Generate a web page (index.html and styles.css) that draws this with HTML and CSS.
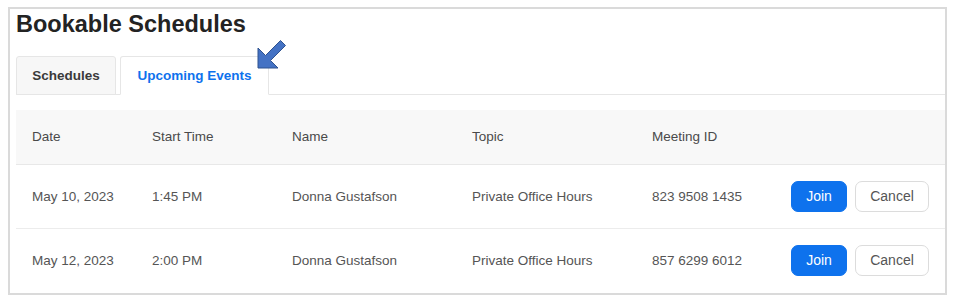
FILE: index.html
```html
<!DOCTYPE html>
<html lang="en">
<head>
  <meta charset="UTF-8" />
  <title>Bookable Schedules</title>
  <link rel="stylesheet" href="styles.css">
</head>
<body>
  <div class="frame">
    <h1 class="page-title">Bookable Schedules</h1>

    <!-- TABS -->
    <div class="tabs">
      <div class="tab tab-schedules">Schedules</div>
      <div class="tab tab-upcoming active">Upcoming Events</div>
    </div>

    <!-- callout arrow -->
    <svg class="callout" width="35" height="35" viewBox="0 0 35 35" aria-hidden="true">
      <polygon points="3,31 3,11 10.5,18.5 25.5,3.5 30.5,8.5 15.5,23.5 23,31" fill="#4472c4" stroke="#2f528f" stroke-width="1"/>
    </svg>

    <!-- EVENTS TABLE -->
    <table class="events">
      <colgroup>
        <col class="c-date"><col class="c-time"><col class="c-name"><col class="c-topic"><col class="c-id"><col>
      </colgroup>
      <thead>
        <tr>
          <th>Date</th><th>Start Time</th><th>Name</th><th>Topic</th><th>Meeting ID</th><th></th>
        </tr>
      </thead>
      <tbody>
        <tr>
          <td>May 10, 2023</td><td>1:45 PM</td><td>Donna Gustafson</td><td>Private Office Hours</td><td>823 9508 1435</td>
          <td class="actions"><button class="btn btn-join">Join</button><button class="btn btn-cancel">Cancel</button></td>
        </tr>
        <tr>
          <td>May 12, 2023</td><td>2:00 PM</td><td>Donna Gustafson</td><td>Private Office Hours</td><td>857 6299 6012</td>
          <td class="actions"><button class="btn btn-join">Join</button><button class="btn btn-cancel">Cancel</button></td>
        </tr>
      </tbody>
    </table>
  </div>
</body>
</html>
```

FILE: styles.css
```css
/* BASE */
* { margin:0; padding:0; box-sizing:border-box; }
body { background:#fff; font-family:'Liberation Sans', Arial, sans-serif; color:#555; }

/* OUTER FRAME */
.frame {
  position:relative;
  width:939px; height:288px;
  margin:7px 0 0 8px;
  border:2px solid #dadada;
  padding:2px 0 0 6px;
}
.page-title {
  font-size:23.5px; line-height:26px; font-weight:700; color:#232323;
}

/* TABS */
.tabs {
  display:flex; gap:4px;
  margin-top:19px;
  border-bottom:1px solid #e6e6e6;
}
.tab {
  height:39px; margin-bottom:-1px;
  display:flex; align-items:center; justify-content:center;
  font-size:13.5px; font-weight:700; color:#3a3a3a;
  background:#f7f7f7;
  border:1px solid #e6e6e6;
  border-radius:3px 3px 0 0;
}
.tab-schedules { width:100px; }
.tab-upcoming { width:149px; }
.tab.active {
  background:#fff; color:#0e72ed;
  border-bottom-color:#fff;
}
.callout { position:absolute; left:245px; top:28px; }

/* TABLE */
.events {
  width:100%; margin-top:15px;
  table-layout:fixed;
  border-collapse:collapse;
  font-size:13.5px; color:#555;
}
.c-date { width:136px; }
.c-time { width:140px; }
.c-name { width:180px; }
.c-topic { width:180px; }
.c-id { width:123px; }
.events th {
  height:54px; padding:0;
  text-align:left; font-weight:400; color:#4a4a4a;
  background:#f8f8f8;
  border-bottom:1px solid #e8e8e8;
}
.events td {
  height:64px; padding:0;
  border-bottom:1px solid #ececec;
}
.events tbody tr:last-child td { border-bottom:none; }
.events th:first-child, .events td:first-child { padding-left:16px; }
.events td.actions { padding:0 17px 0 16px; white-space:nowrap; }

/* BUTTONS */
.btn {
  height:31px; border-radius:7px;
  font-family:inherit; font-size:14px; cursor:pointer;
  vertical-align:middle;
}
.btn-join { width:56px; background:#0e72ed; color:#fff; border:1px solid #0e72ed; }
.btn-cancel { width:74px; margin-left:8px; background:#fff; color:#555; border:1px solid #dcdcdc; }
```
